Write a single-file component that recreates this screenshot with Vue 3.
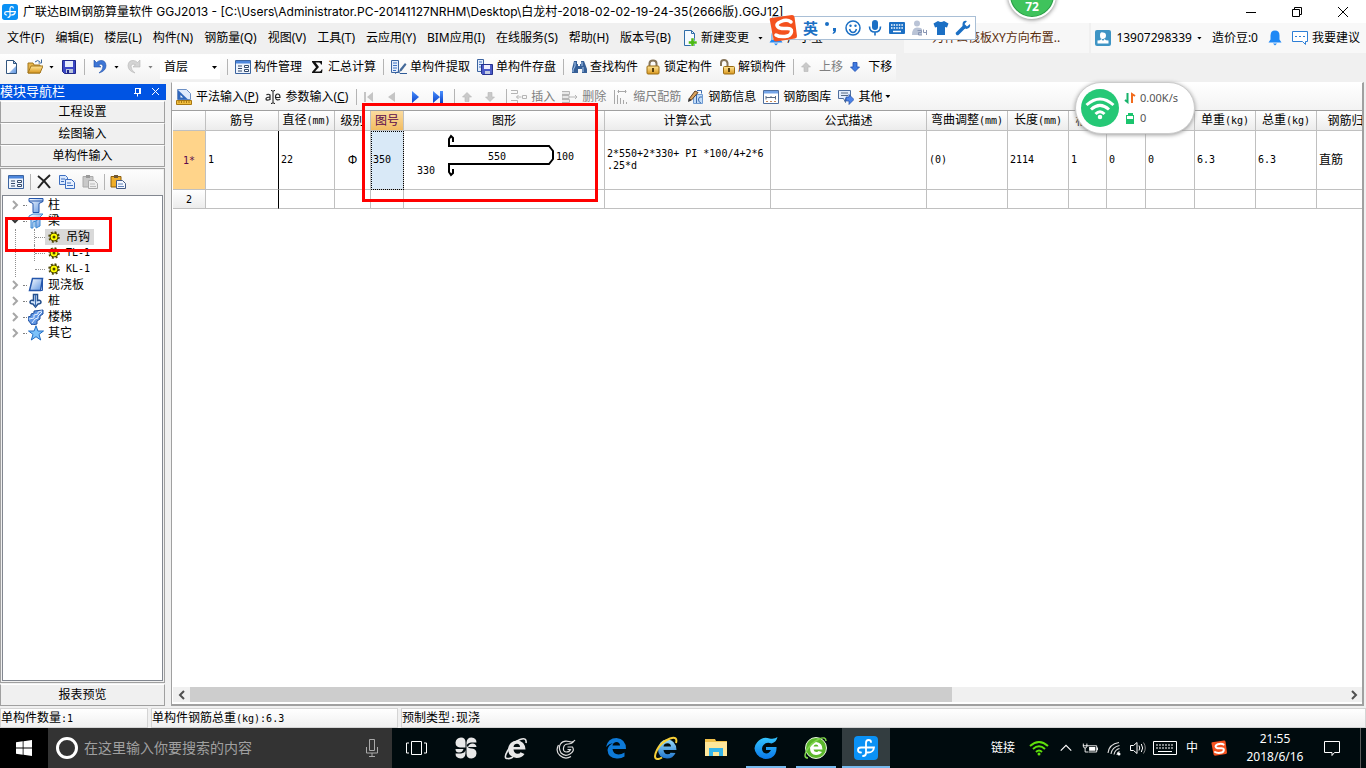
<script setup>
const menus = ['文件(F)', '编辑(E)', '楼层(L)', '构件(N)', '钢筋量(Q)', '视图(V)', '工具(T)', '云应用(Y)', 'BIM应用(I)', '在线服务(S)', '帮助(H)', '版本号(B)']

const columns = [
  { label: '', w: 33 }, { label: '筋号', w: 73 }, { label: '直径', unit: '(mm)', w: 56 },
  { label: '级别', w: 36 }, { label: '图号', w: 33, active: true }, { label: '图形', w: 201 },
  { label: '计算公式', w: 166 }, { label: '公式描述', w: 156 }, { label: '弯曲调整', unit: '(mm)', w: 81 },
  { label: '长度', unit: '(mm)', w: 61 }, { label: '根数', w: 38 }, { label: '搭接', w: 39 },
  { label: '损耗', unit: '(%)', w: 49 }, { label: '单重', unit: '(kg)', w: 61 },
  { label: '总重', unit: '(kg)', w: 61 }, { label: '钢筋归类', w: 70 },
]
const tableWidth = columns.reduce((sum, c) => sum + c.w, 0)

const tree = [
  { label: '柱', icon: 'column' },
  { label: '梁', icon: 'beam', open: true, children: [
    { label: '吊钩', selected: true }, { label: 'TL-1', latin: true }, { label: 'KL-1', latin: true },
  ] },
  { label: '现浇板', icon: 'slab' }, { label: '桩', icon: 'pile' },
  { label: '楼梯', icon: 'stairs' }, { label: '其它', icon: 'star' },
]

const apps = [
  { id: 'taskview', name: '任务视图' }, { id: 'pinwheel', name: '应用' }, { id: 'ewhite', name: '浏览器' },
  { id: 'gwhite', name: '广联达' }, { id: 'edge', name: 'Edge' }, { id: 'ie', name: 'Internet Explorer' },
  { id: 'folder', name: '文件资源管理器' }, { id: 'gblue', name: '广联达', run: true },
  { id: 'egreen', name: '浏览器', run: true }, { id: 'ggj', name: 'GGJ2013', run: true, on: true },
]
</script>

<template>
  <div class="desktop">
    <svg class="defs" aria-hidden="true">
      <defs>
        <linearGradient id="gBlue" x1="0" y1="0" x2="1" y2="1"><stop offset="0" stop-color="#fff" /><stop offset="1" stop-color="#5b93e0" /></linearGradient>
        <linearGradient id="gGold" x1="0" y1="0" x2="0" y2="1"><stop offset="0" stop-color="#ffe79a" /><stop offset="1" stop-color="#d9961c" /></linearGradient>
        <linearGradient id="gPlay" x1="0" y1="0" x2="0" y2="1"><stop offset="0" stop-color="#4a90ff" /><stop offset="1" stop-color="#0b43c8" /></linearGradient>
        <linearGradient id="gIe" x1="0" y1="0" x2="0" y2="1"><stop offset="0" stop-color="#9adcfb" /><stop offset="1" stop-color="#1d74cc" /></linearGradient>
        <linearGradient id="gG" x1="0" y1="0" x2="0" y2="1"><stop offset="0" stop-color="#35c6ff" /><stop offset="1" stop-color="#0a78e8" /></linearGradient>
      </defs>
      <symbol id="ggj" viewBox="0 0 24 24"><rect width="24" height="24" rx="4" fill="#0a91f5" /><path d="M12 17V7q0-3 2.500-3T17 6M12 11.500H7q-3 0-3 2.500t3 2.500M12 11.500h8q-.5 5-6 5h-2M12 17q0 3-3 3" fill="none" stroke="#fff" stroke-width="1.800" stroke-linecap="round" /></symbol>
      <symbol id="new" viewBox="0 0 16 16"><path d="M2.500 1.500h7l3 3v10h-10z" fill="url(#gBlue)" stroke="#33567f" /><path d="M3 2h6v3h3v2l-7 7h-2z" fill="#fff" /><path d="M9.500 1.500v3h3" fill="none" stroke="#33567f" /></symbol>
      <symbol id="open" viewBox="0 0 16 16"><path d="M1 14V4h5l1 2h6v8z" fill="#e6b64c" stroke="#a3761d" /><path d="M1 14l3-7h12l-3 7z" fill="url(#gGold)" stroke="#a3761d" /><path d="M8 3q3-3 5 0M14.500 0.500v3.500h-3" fill="none" stroke="#38669c" /></symbol>
      <symbol id="save" viewBox="0 0 16 16"><path d="M1.500 1.500h13v13h-11l-2-2z" fill="#3b47c4" stroke="#20288a" /><path d="M4 2h8v6H4z" fill="#e6ecfb" /><path d="M5 10h7v4H5z" fill="#b9c4dd" /><path d="M6 11h2v3H6z" fill="#20288a" /></symbol>
      <symbol id="undo" viewBox="0 0 16 16"><path d="M2 1v7h7L6.500 5.800Q10 4 11 7q0 4-4 7 7-2 7-7.500Q13.500 1 8.500 1.500 6 1.800 4.500 3.500z" fill="#3d76d6" stroke="#204fa8" stroke-width=".6" /></symbol>
      <symbol id="redo" viewBox="0 0 16 16"><path d="M14 1v7H7l2.500-2.200Q6 4 5 7q0 4 4 7-7-2-7-7.500Q2.500 1 7.500 1.500 10 1.800 11.500 3.500z" fill="#d4d4d4" stroke="#b5b5b5" stroke-width=".6" /></symbol>
      <symbol id="form" viewBox="0 0 16 16"><path d="M.5 1.500h15v13H.5z" fill="#eef4fd" stroke="#3c64a0" /><path d="M1 2h14v2.500H1z" fill="#4c86dc" /><path d="M3 7h4M3 9.500h4M3 12h4" stroke="#354a6b" /><path d="M9.500 6.500h4v2h-4zM9.500 10.500h4v2h-4z" fill="#fff" stroke="#354a6b" /></symbol>
      <symbol id="sigma" viewBox="0 0 16 16"><path d="M3 2h10v3.500h-1Q11.500 3.500 10 3.500H6.500L10 8l-4 4.500h4.500q1.500 0 2-2h1L13 14H3v-1l4-4.800L3 3z" fill="#111" /></symbol>
      <symbol id="extract" viewBox="0 0 16 16"><path d="M.5 1.500h7v12h-7z" fill="#e4edfb" stroke="#3c64a0" /><path d="M2 4h4M2 6.500h4M2 9h4M2 11.500h3" stroke="#3f72c4" /><path d="M8 13l1-3 5-6 1.500 1.500-5 6.500z" fill="#456a9a" /><path d="M4 14.500q4-3 5 0h7" fill="none" stroke="#2f5b98" /></symbol>
      <symbol id="store" viewBox="0 0 16 16"><path d="M.5.500h6v12h-6z" fill="#e4edfb" stroke="#3c64a0" /><path d="M2 3h3M2 5.500h3M2 8h3" stroke="#3f72c4" /><path d="M4.500 5.500h11v10h-10l-1-1z" fill="#4a5ac8" stroke="#26328e" /><path d="M7 6h6v4H7z" fill="#eef" /><path d="M8 12h5v3H8z" fill="#c4cce2" /></symbol>
      <symbol id="find" viewBox="0 0 16 16"><path d="M3 2h3v3h1v2h2V5h1V2h3l3 8v4h-5v-4H7v4H1v-4z" fill="#365f96" /><path d="M4 3v4l-2 4v2M11 3v4M12 8v5" stroke="#a8c8ef" fill="none" /></symbol>
      <symbol id="lock" viewBox="0 0 16 16"><path d="M4.500 8V4.500q0-3 3.500-3t3.500 3V8" fill="none" stroke="#85745a" stroke-width="2" /><rect x="2" y="7" width="12" height="8" rx="1" fill="url(#gGold)" stroke="#9b6d14" /><path d="M8 9v4" stroke="#5b400d" stroke-width="2" /></symbol>
      <symbol id="unlock" viewBox="0 0 16 16"><path d="M2 7V4q0-3 3-3t3.500 3v4" fill="none" stroke="#85745a" stroke-width="2" /><rect x="4.500" y="7.500" width="11" height="7.500" rx="1" fill="url(#gGold)" stroke="#9b6d14" /><path d="M10 9v4" stroke="#5b400d" stroke-width="2" /></symbol>
      <symbol id="upg" viewBox="0 0 10 10"><path d="M5 .5L9.500 5H7v4.500H3V5H.5z" fill="#c9c9c9" stroke="#b5b5b5" stroke-width=".6" /></symbol>
      <symbol id="downg" viewBox="0 0 10 10"><path d="M5 9.500L9.500 5H7V.5H3V5H.5z" fill="#c9c9c9" stroke="#b5b5b5" stroke-width=".6" /></symbol>
      <symbol id="downb" viewBox="0 0 10 10"><path d="M5 9.500L9.500 5H7V.5H3V5H.5z" fill="#3f7ae0" stroke="#1d4bb0" stroke-width=".8" /></symbol>
      <symbol id="ruler" viewBox="0 0 16 16"><path d="M1.500.500h9l4 4v6h-13z" fill="#dfeafc" stroke="#6c8fc4" /><path d="M2 1l10 9.500H2z" fill="#2f67bd" /><path d="M4.500 6v2.500H7z" fill="#fff" /><path d="M.5 11.500h15v4H.5z" fill="#f2bf3f" stroke="#a87812" /><path d="M3 12v2M5.500 12v2M8 12v2M10.500 12v2M13 12v2" stroke="#a87812" /></symbol>
      <symbol id="abc" viewBox="0 0 16 16"><path d="M1.500 6Q3 4.500 5 6v5M5 8Q1 8 1 10t4 .5M10.500 8.500h4.500Q15 5 12.700 5T10.500 8.500q.5 3.500 4.500 2" fill="none" stroke="#222" stroke-width="1.200" /><path d="M6 1.500q2 0 2 1 0-1 2-1M8 2.500v11M6 14.500q2 0 2-1 0 1 2 1" fill="none" stroke="#111" /></symbol>
      <symbol id="first" viewBox="0 0 10 12"><path d="M0 1h2v10H0zM9 1v10L3 6z" fill="#c5c5c5" /></symbol>
      <symbol id="prev" viewBox="0 0 10 12"><path d="M8 1v10L1 6z" fill="#c5c5c5" /></symbol>
      <symbol id="next" viewBox="0 0 10 12"><path d="M2 0v12l7-6z" fill="url(#gPlay)" /></symbol>
      <symbol id="last" viewBox="0 0 10 12"><path d="M0 0v12l7-6zM7 0h3v12H7z" fill="url(#gPlay)" /></symbol>
      <symbol id="insert" viewBox="0 0 16 16"><path d="M0 1.500h6.500v3H0M0 11.500h6.500v3H0M11.500 6.500h4v3h-4zM10.500 8h-5M7.500 6L5.500 8l2 2" fill="none" stroke="#b5b5b5" /></symbol>
      <symbol id="delete" viewBox="0 0 16 16"><path d="M0 2.500h7.500v3H0M0 10.500h7.500v3H0M0 6.500h7v3H0z" fill="#e8e8e8" stroke="#b5b5b5" /><path d="M7 8h8M13 6l2 2-2 2" fill="none" stroke="#b5b5b5" /></symbol>
      <symbol id="scale" viewBox="0 0 16 16"><path d="M1.500 1v14M4.500 2.500h9M5.500 1v3M12.500 1v3M4.500 6v9M7.500 9v6M10.500 11v4M13.500 13v2" fill="none" stroke="#a8a8a8" /></symbol>
      <symbol id="info" viewBox="0 0 16 16"><path d="M5.500 5.500h9v9h-9z" fill="#c2dcf8" stroke="#6f9bd2" /><path d="M9 1.500h4.500v3M8.500 6v8M14 8q-3-1-3.500 2t2.500 4" stroke="#3d6cae" fill="none" /><path d="M1 10L7 2l3 1.500L3.500 11z" fill="#d9a35e" stroke="#5c3e23" /><path d="M.5 9.500L0 13l3.500-1.500z" fill="#333" /></symbol>
      <symbol id="lib" viewBox="0 0 16 16"><path d="M.5 1.500h15v13H.5z" fill="#fff" stroke="#4e6e9e" /><path d="M1 2h14v2.500H1z" fill="#75a5e8" /><path d="M3 7v3.500M3 8.500h9M12.500 7v3.500M8 8.500V7" fill="none" stroke="#596a82" /><path d="M3 12.500h2M7 12.500h2M11 12.500h2" stroke="#c78a5a" /></symbol>
      <symbol id="other" viewBox="0 0 16 16"><path d="M.5 1.500h12v8h-5v4l-2-4h-5z" fill="#e2edfc" stroke="#4e6e9e" /><path d="M3 4h7M3 6.500h7" stroke="#596a82" /><path d="M8 8h3V5.500l5 5-5 5V12H8z" fill="#4c83e8" stroke="#214ca3" stroke-width=".7" /></symbol>
      <symbol id="cross" viewBox="0 0 16 16"><path d="M2 2q7 5 12 12M14 1Q8 6 2 14" fill="none" stroke="#222" stroke-width="2" /></symbol>
      <symbol id="copy" viewBox="0 0 16 16"><path d="M.5 1.500h6l2 2v7h-8z" fill="#d9e8fd" stroke="#3e6fc0" /><path d="M6.500 5.500h6l3 3v6h-9z" fill="#e8f1fe" stroke="#3e6fc0" /><path d="M2 5h4M2 7.500h3M8 9h4M8 11.500h6" stroke="#3e6fc0" /></symbol>
      <symbol id="pasteg" viewBox="0 0 16 16"><path d="M1 2.500h10V13H1z" fill="#c9c9c9" stroke="#aaa" /><path d="M4 1h4v3H4z" fill="#999" /><path d="M6.500 6.500h6l3 3v5h-9z" fill="#eee" stroke="#aaa" /><path d="M8 10h5M8 12.500h6" stroke="#bbb" /></symbol>
      <symbol id="paste" viewBox="0 0 16 16"><path d="M1 2.500h10V13H1z" fill="#efae2a" stroke="#8c5e0d" /><path d="M4 1h4v3H4z" fill="#705836" /><path d="M6.500 6.500h6l3 3v5h-9z" fill="#f4f8ff" stroke="#445a85" /><path d="M8 10h5M8 12.500h6" stroke="#6584b9" /></symbol>
      <symbol id="column" viewBox="0 0 16 16"><path d="M1 1.500h14v3l-4 2v9H5v-9l-4-2z" fill="url(#gBlue)" stroke="#2456ab" /><path d="M1 4h14" stroke="#2456ab" /></symbol>
      <symbol id="beam" viewBox="0 0 16 16"><path d="M1 3l4-2h10l-3 3v9l-4 2V8L5 9v6H3V7L1 6z" fill="url(#gBlue)" stroke="#3c8ad4" /><path d="M1 5h11M8 8l4-3M7 8v6" fill="none" stroke="#3c8ad4" /></symbol>
      <symbol id="slab" viewBox="0 0 16 16"><path d="M4.500 1.500h10l-2 12h-11z" fill="url(#gBlue)" stroke="#2456ab" stroke-width="1.500" /><path d="M14.500 1.500v12h-2" fill="none" stroke="#2456ab" /></symbol>
      <symbol id="pile" viewBox="0 0 16 16"><path d="M5.500 1.500h4v6q3-1 3.500 1.500 0 2-3 2L7.500 14 5 11q-3 0-3-2 .5-2.500 3.500-1.500z" fill="#cfe2fb" stroke="#234f8d" stroke-width="1.500" /><path d="M7.500 2v12" stroke="#3a6fb5" /></symbol>
      <symbol id="stairs" viewBox="0 0 16 16"><path d="M0 11V8l3-1V5l3-1V2l9-1v4l-3 2v3l-3 2v3l-5 1z" fill="#5f96e5" stroke="#23529f" /><path d="M1 10l5-1V6l4-1V3l4-1M4 14l3-4 3-1V7l4-4" fill="none" stroke="#e6f0ff" /></symbol>
      <symbol id="star" viewBox="0 0 16 16"><path d="M8 .8l1.900 5.200h5.600l-4.500 3.400 1.700 5.600L8 11.700 3.300 15 5 9.400.5 6h5.600z" fill="#7cc2fa" stroke="#226dc4" /></symbol>
      <symbol id="gear" viewBox="0 0 12 12"><circle cx="6" cy="6" r="4" fill="#ff0" stroke="#4d4600" /><circle cx="6" cy="6" r="5" fill="none" stroke="#4d4600" stroke-width="1.500" stroke-dasharray="2 1.930" /><circle cx="6" cy="6" r="1.500" fill="#4d4600" /></symbol>
      <symbol id="newdoc" viewBox="0 0 16 16"><path d="M2.500.500h7l3 3v12h-10z" fill="#f5faff" stroke="#2f6da8" /><path d="M9.500.500v3h3" fill="none" stroke="#2f6da8" /><path d="M9 8h3v3h3v3h-3v2.500H9V14H6.500v-3H9z" fill="#4cb916" stroke="#fff" stroke-width=".5" /></symbol>
      <symbol id="user" viewBox="0 0 16 16"><rect width="16" height="16" rx="2" fill="#3e94c4" /><path d="M8 2.500q3 0 3 3T8 9 5 5.500t3-3M2.500 13.500v-3q3 0 4-1.500L8 11l1.500-2q1 1.500 4 1.500v3z" fill="#fff" /></symbol>
      <symbol id="bell" viewBox="0 0 14 16"><path d="M7 .500q4.500 0 4.500 5v4l2 3H.5l2-3v-4q0-5 4.500-5M5 13.500h4L7 15.500z" fill="#1e88f5" /></symbol>
      <symbol id="chat" viewBox="0 0 16 16"><path d="M.5 1.500h15v10h-2v3l-3-3H.5z" fill="#fff" stroke="#2e7fd6" /><path d="M3 6.500h2M7 6.500h2M11 6.500h2" stroke="#2e7fd6" /></symbol>
      <symbol id="sogou" viewBox="0 0 28 28"><path d="M2 4L23 1q2 0 2.500 2L28 22q0 2-2 2.500L7 27.500q-2 0-2.500-2L1 7Q0 4 2 4z" fill="#f4511e" /><path d="M22 8Q18 5 12 7.500T9 13q2 2 8 1.500t5.500 3Q22 22 16 22.500T7 21" fill="none" stroke="#fff" stroke-width="3.500" stroke-linecap="round" /></symbol>
      <symbol id="comma" viewBox="0 0 16 16"><circle cx="4" cy="4" r="2" fill="#1b6fc4" /><path d="M10 8h3v3q0 2-3 3l-.5-.5 1.500-2.500h-1z" fill="#1b6fc4" /></symbol>
      <symbol id="smile" viewBox="0 0 16 16"><circle cx="8" cy="8" r="7" fill="none" stroke="#1b6fc4" stroke-width="1.500" /><path d="M4.500 9q1 3.500 3.500 3.500T11.500 9" fill="none" stroke="#1b6fc4" stroke-width="1.500" /><circle cx="5.500" cy="5.800" r="1.200" fill="#1b6fc4" /><circle cx="10.500" cy="5.800" r="1.200" fill="#1b6fc4" /></symbol>
      <symbol id="micb" viewBox="0 0 16 16"><rect x="5" y="0" width="6" height="10" rx="3" fill="#1b6fc4" /><path d="M2.500 6.500q0 5.500 5.500 5.500t5.500-5.500M8 12v3.500" fill="none" stroke="#1b6fc4" stroke-width="1.600" /></symbol>
      <symbol id="keyb" viewBox="0 0 16 16"><rect y="2" width="16" height="12" rx="1" fill="#1b6fc4" /><path d="M2 5h12M2 8h12" stroke="#fff" stroke-width="1.500" stroke-dasharray="1.500 1.100" /><path d="M4 11.500h8" stroke="#fff" stroke-width="1.500" /></symbol>
      <symbol id="person" viewBox="0 0 16 16"><circle cx="6" cy="3.500" r="3" fill="#b9c3d6" /><path d="M1 15Q1 7.500 6 7.500t5 2v5.500z" fill="#b9c3d6" /><path d="M6.500 10.500h4v2h-3v2.500h3.500M15.500 10v5M12.500 9.500v3h3" fill="none" stroke="#8996b4" /></symbol>
      <symbol id="shirt" viewBox="0 0 16 16"><path d="M5 1q3 2 6 0l4.500 2.500L14 7.500l-2-.5v8H4V7l-2 .5L.5 3.500z" fill="#1b6fc4" /></symbol>
      <symbol id="wrench" viewBox="0 0 16 16"><path d="M2.500 13.500L9 7" stroke="#1b6fc4" stroke-width="3.500" stroke-linecap="round" /><path d="M15 4l-3 2.500L9.500 4 12 1Q8 0 7.500 4t4 5Q16 8 15 4z" fill="#1b6fc4" /></symbol>
      <symbol id="wifi" viewBox="0 0 20 16"><path d="M1 6Q10-2 19 6M4 9q6-5.500 12 0M7 12q3-3 6 0" fill="none" stroke="currentColor" stroke-width="2" /><circle cx="10" cy="14" r="1.500" fill="currentColor" /></symbol>
      <symbol id="win" viewBox="0 0 16 16"><path d="M0 2.200L6.700 1.300v6.300H0zM7.500 1.200L16 0v7.600H7.500zM0 8.400h6.700v6.300L0 13.800zM7.500 8.400H16V16l-8.500-1.200z" fill="#fff" /></symbol>
      <symbol id="mic" viewBox="0 0 16 18"><path d="M5.500.500h5v11h-5zM2.500 8v6h11V8M8 14v3.500M5 17.500h6" fill="none" stroke="#aaa" /></symbol>
      <symbol id="taskview" viewBox="0 0 24 24"><path d="M7.500 5.500h10v13h-10zM5 7H2.500v10H5M20 7h2.500v10H20" fill="none" stroke="#fff" /></symbol>
      <symbol id="pinwheel" viewBox="0 0 24 24"><path d="M11.500 11.500H6q-4.500-.5-4.500-5Q2 2 7 1.500q4.500 0 4.500 5zM12.500 10V6.500q.5-5 5-5 5 .5 5 5H17Q13 7 12.500 10zM14 12.500h4q4.500.5 4.500 5-.5 4.500-5 5-5 0-5-5v-9q1 4 5 4zM11.500 14v3.500q-.5 5-5 5-5-.5-5-5H7q4-.5 4.500-3.500z" fill="#e8e8e8" /><path d="M1.500 13h8q-1 3.500-4.500 3.500T1.500 13zM14 11q1-3.500 4.500-3.500T22.500 11z" fill="#e8e8e8" /></symbol>
      <symbol id="ewhite" viewBox="0 0 24 24"><path d="M20.500 18Q18 22 12.500 22 4 21 4 13 5 5 13 4.500q8 .5 8.500 9H9.500q.5 4 4 4.300 2.500 0 3-1.500zM9.500 11H16q0-3-3-3.200-3 0-3.500 3.200z" fill="#e8e8e8" fill-rule="evenodd" /><path d="M22 7q1-6-6-3.500Q8 7 3.500 15T4 22.500q2 .5 5-1.500" fill="none" stroke="#e8e8e8" stroke-width="1.600" /></symbol>
      <symbol id="gwhite" viewBox="0 0 24 24"><path d="M21 4q-2 3-6 1.500Q9 4 6.500 8T7 17q4 4 9 1t2.500-7h-5M20 5q-2 3-6 3-4 0-4.500 4t3 4q3 0 4-2.500h-3M4.500 9Q1 15 6 19.500t11 1" fill="none" stroke="#ddd" stroke-width="1.200" /></symbol>
      <symbol id="edge" viewBox="0 0 24 24"><path d="M2 11Q4 2 12.500 2 22 3 22 13H8.500q.5 5 6 5.500 3 0 6-2v4Q17 23 12.500 22.500 4 22 3.500 14 4 9.500 9 7 5 7.500 2 11zm6.500-1.500h7.500q0-3-3-3.500-4 0-4.500 3.500z" fill="#0d7ad8" fill-rule="evenodd" /></symbol>
      <symbol id="ie" viewBox="0 0 24 24"><path d="M21.500 17Q19 22.500 13 22.500 4 22 4 13 5 4 13 3.500q9 .5 9.500 10.500H9.500q.5 4 4 4.300 2.500 0 3-1.500zM9.500 10.500H17q0-3-3.500-3.200-3.500 0-4 3.200z" fill="url(#gIe)" fill-rule="evenodd" /><path d="M22 7q2-7-6-4.500Q7 6 3 14t0 9q2 .5 5-1.500" fill="none" stroke="#f6cf38" stroke-width="2" /></symbol>
      <symbol id="folder" viewBox="0 0 24 24"><path d="M1 3h10l1 2h11v15H1z" fill="#f0c04a" /><path d="M1 6h22v14H1z" fill="#ffe79a" /><path d="M5 20v-8h14v8h-4v-4H9v4z" fill="#35b5ea" /></symbol>
      <symbol id="gblue" viewBox="0 0 24 24"><path d="M23.500 1q-1 5-6 6.500-5-2-8 1.500t0 7.500q4 2.500 6.500-1L17 14h-5v-3h10.500q.5 8-5.500 11-9 3-14-3.500T3 6.500Q8 0 15.500 2.500q5 1 8-1.500z" fill="url(#gG)" /></symbol>
      <symbol id="egreen" viewBox="0 0 24 24"><circle cx="12" cy="12" r="10.500" fill="#5cb82c" stroke="#e6f5dc" stroke-width="1" /><path d="M18 16q-2 3-6 3-6-.5-6-7 .5-6 6-6 6.500.5 6.500 7.500H9.500q.5 2.500 3 2.500 1.500 0 2-1zM9.500 10.500h5q-.5-2-2.500-2t-2.500 2z" fill="#fff" fill-rule="evenodd" /><path d="M22 5q0-5-7-2Q6 8 2.500 15T4 22" fill="none" stroke="#7fd64b" stroke-width="1.500" /></symbol>
      <symbol id="up" viewBox="0 0 16 16"><path d="M2 11l6-6 6 6" fill="none" stroke="#fff" stroke-width="1.300" /></symbol>
      <symbol id="battery" viewBox="0 0 18 16"><path d="M5.500 5.500h11v7h-9M1.500 3v3q0 2 2 2t2-2V3M1 5.500h5M3.500 8v4.500H7" fill="none" stroke="#fff" /><path d="M8 7h7v4H8zM17 7.500h1v3h-1z" fill="#fff" /></symbol>
      <symbol id="signal" viewBox="0 0 16 16"><path d="M2 13Q3 4 13 2.500M5 14q1-7 8.500-8.500M8 14.500q1-5 5.500-6M11 15q0-2.500 2.500-3.500" fill="none" stroke="#ddd" stroke-width="1.100" /><circle cx="13" cy="14" r="1.500" fill="#fff" /></symbol>
      <symbol id="volume" viewBox="0 0 16 16"><path d="M.5 5.500h3l3.500-3v11l-3.500-3h-3zM9 5.500q1.500 2.500 0 5M11.300 4q2.700 4 0 8" fill="none" stroke="#fff" /><path d="M13.500 2.500q3.500 5.500 0 11" fill="none" stroke="#888" /></symbol>
      <symbol id="keyw" viewBox="0 0 24 16"><path d="M.5 1.500h23v13H.5z" fill="none" stroke="#fff" /><path d="M3 5h18M3 8h18" stroke="#fff" stroke-dasharray="2 1" /><path d="M5 11.500h14" stroke="#fff" /></symbol>
      <symbol id="note" viewBox="0 0 16 16"><path d="M.5 1.500h15v11h-5l-2.500 3v-3H.5z" fill="none" stroke="#fff" /></symbol>
    </svg>

    <header class="titlebar">
      <svg class="i16"><use href="#ggj" /></svg>
      <h1>广联达BIM钢筋算量软件 GGJ2013 - [C:\Users\Administrator.PC-20141127NRHM\Desktop\白龙村-2018-02-02-19-24-35(2666版).GGJ12]</h1>
      <div class="winbtns">
        <button aria-label="最小化"><svg class="i12"><path d="M1 6.500h10" /></svg></button>
        <button aria-label="还原"><svg class="i12"><path d="M1.500 3.500h7v7h-7zM3.500 3.500v-2h7v7h-2" /></svg></button>
        <button aria-label="关闭"><svg class="i12"><path d="M1 1l10 10M11 1L1 11" /></svg></button>
      </div>
    </header>

    <nav class="menubar">
      <button v-for="m in menus" :key="m">{{ m }}</button>
      <button class="change"><svg class="i16"><use href="#newdoc" /></svg>新建变更<i class="tri"></i></button>
      <button class="helper"><svg class="i16"><use href="#bell" /></svg>广小宝</button>
      <a href="#" class="question">为什么筏板XY方向布置..</a>
      <div class="account">
        <button class="phone"><svg class="i16"><use href="#user" /></svg>13907298339<i class="tri"></i></button>
        <span>造价豆:0</span>
        <button aria-label="通知"><svg class="i14"><use href="#bell" /></svg></button>
        <button class="advice"><svg class="i16"><use href="#chat" /></svg>我要建议</button>
      </div>
    </nav>

    <div class="toolrow">
      <div class="toolbar top">
        <button aria-label="新建"><svg class="i16"><use href="#new" /></svg></button>
        <button class="drop" aria-label="打开"><svg class="i16"><use href="#open" /></svg><i class="tri"></i></button>
        <button aria-label="保存"><svg class="i16"><use href="#save" /></svg></button>
        <i class="sep"></i>
        <button class="drop" aria-label="撤销"><svg class="i16"><use href="#undo" /></svg><i class="tri"></i></button>
        <button class="drop off" aria-label="恢复"><svg class="i16"><use href="#redo" /></svg><i class="tri"></i></button>
        <label class="floor"><select aria-label="楼层"><option>首层</option></select><i class="tri"></i></label>
        <i class="sep"></i>
        <button><svg class="i16"><use href="#form" /></svg>构件管理</button>
        <button><svg class="i16"><use href="#sigma" /></svg>汇总计算</button>
        <i class="sep"></i>
        <button><svg class="i16"><use href="#extract" /></svg>单构件提取</button>
        <button><svg class="i16"><use href="#store" /></svg>单构件存盘</button>
        <i class="sep"></i>
        <button><svg class="i16"><use href="#find" /></svg>查找构件</button>
        <button><svg class="i16"><use href="#lock" /></svg>锁定构件</button>
        <button><svg class="i16"><use href="#unlock" /></svg>解锁构件</button>
        <i class="sep"></i>
        <button class="move off"><svg class="i10"><use href="#upg" /></svg>上移</button>
        <button class="move"><svg class="i10"><use href="#downb" /></svg>下移</button>
      </div>
    </div>

    <main class="work">
      <aside class="side">
        <div class="sidehead">
          <h2>模块导航栏</h2>
          <button aria-label="固定"><svg class="i12"><path d="M3.500 2v5M7.500 2v5M3 2.500h5M2 7.500h7M5.500 7.500v3M8.500 2v5" /></svg></button>
          <button aria-label="关闭"><svg class="i12"><path d="M2 2l7 7M9 2l-7 7" /></svg></button>
        </div>
        <button class="mod">工程设置</button>
        <button class="mod">绘图输入</button>
        <button class="mod">单构件输入</button>
        <div class="sidebody">
          <div class="sidetools">
            <button aria-label="构件管理"><svg class="i16"><use href="#form" /></svg></button>
            <i class="sep"></i>
            <button aria-label="删除"><svg class="i16"><use href="#cross" /></svg></button>
            <button aria-label="复制"><svg class="i16"><use href="#copy" /></svg></button>
            <button aria-label="粘贴" disabled><svg class="i16"><use href="#pasteg" /></svg></button>
            <i class="sep"></i>
            <button aria-label="粘贴构件"><svg class="i16"><use href="#paste" /></svg></button>
          </div>
          <ul class="tree">
            <li v-for="n in tree" :key="n.label">
              <div class="node">
                <svg class="i10 chev"><path :d="n.open ? 'M2 3l3 3 3-3' : 'M3 1l4 4-4 4'" :stroke="n.open ? '#333' : '#a6a6a6'" /></svg>
                <i class="dots"></i>
                <svg class="i16"><use :href="'#' + n.icon" /></svg>
                <span>{{ n.label }}</span>
              </div>
              <ul v-if="n.children" class="kids">
                <li v-for="k in n.children" :key="k.label" class="kid">
                  <i class="branch"></i>
                  <span class="leaf" :class="{ sel: k.selected }"><svg class="i12"><use href="#gear" /></svg><b :class="{ mono: k.latin }">{{ k.label }}</b></span>
                </li>
              </ul>
            </li>
          </ul>
        </div>
        <button class="mod">报表预览</button>
        <i class="mark treemark"></i>
      </aside>

      <section class="pane">
        <div class="toolbar sub">
          <button><svg class="i16"><use href="#ruler" /></svg><span>平法输入(<u>P</u>)</span></button>
          <button><svg class="i16"><use href="#abc" /></svg><span>参数输入(<u>C</u>)</span></button>
          <i class="sep"></i>
          <button class="nav" aria-label="首条"><svg class="n12"><use href="#first" /></svg></button>
          <button class="nav" aria-label="上一条"><svg class="n12"><use href="#prev" /></svg></button>
          <button class="nav" aria-label="下一条"><svg class="n12"><use href="#next" /></svg></button>
          <button class="nav" aria-label="末条"><svg class="n12"><use href="#last" /></svg></button>
          <i class="sep"></i>
          <button class="nav" aria-label="上移行"><svg class="i10"><use href="#upg" /></svg></button>
          <button class="nav" aria-label="下移行"><svg class="i10"><use href="#downg" /></svg></button>
          <i class="sep"></i>
          <button class="off"><svg class="i16"><use href="#insert" /></svg>插入</button>
          <button class="off"><svg class="i16"><use href="#delete" /></svg>删除</button>
          <button class="off"><svg class="i16"><use href="#scale" /></svg>缩尺配筋</button>
          <button><svg class="i16"><use href="#info" /></svg>钢筋信息</button>
          <button><svg class="i16"><use href="#lib" /></svg>钢筋图库</button>
          <button><svg class="i16"><use href="#other" /></svg>其他<i class="tri"></i></button>
        </div>
        <div class="gridwrap">
          <table :style="{ width: tableWidth + 'px' }">
            <colgroup><col v-for="(c, i) in columns" :key="i" :style="{ width: c.w + 'px' }"></colgroup>
            <thead>
              <tr><th v-for="(c, i) in columns" :key="i" scope="col" :class="{ hot: c.active, thick: i === 1 }">{{ c.label }}<span v-if="c.unit" class="mono">{{ c.unit }}</span></th></tr>
            </thead>
            <tbody>
              <tr class="r1">
                <th scope="row" class="cur"><span class="mono">1*</span></th>
                <td class="mono thick">1</td><td class="mono">22</td><td class="mid">Φ</td><td class="mono pick">350</td>
                <td class="fig">
                  <svg viewBox="0 0 200 58">
                    <path d="M49 11V7l-2-2-2 3v7h100l4 5v8l-4 5H45v8l2 3 2-2v-4" fill="none" stroke="#000" stroke-width="2" />
                    <text x="84" y="29">550</text><text x="152" y="29">100</text><text x="13" y="43">330</text>
                  </svg>
                </td>
                <td class="mono">2*550+2*330+ PI *100/4+2*6<br>.25*d</td><td></td>
                <td class="mono">(0)</td><td class="mono">2114</td><td class="mono">1</td><td class="mono">0</td>
                <td class="mono">0</td><td class="mono">6.3</td><td class="mono">6.3</td><td>直筋</td>
              </tr>
              <tr class="r2">
                <th scope="row"><span class="mono">2</span></th>
                <td v-for="i in 15" :key="i" :class="{ thick: i === 1 }"></td>
              </tr>
            </tbody>
          </table>
        </div>
        <div class="scroll">
          <button aria-label="向左"><svg class="i10"><path d="M7 1L3 5l4 4" /></svg></button>
          <div class="track"><div class="thumb"></div></div>
          <button aria-label="向右"><svg class="i10"><path d="M3 1l4 4-4 4" /></svg></button>
        </div>
        <i class="mark gridmark"></i>
      </section>
    </main>

    <footer class="status">
      <span>单构件数量<b class="mono">:1</b></span>
      <span>单构件钢筋总重<b class="mono">(kg):6.3</b></span>
      <span>预制类型<b class="mono">:</b>现浇</span>
    </footer>

    <div class="taskbar">
      <button class="start" aria-label="开始"><svg class="i16"><use href="#win" /></svg></button>
      <label class="search">
        <i class="cortana"></i>
        <input type="text" aria-label="搜索" placeholder="在这里输入你要搜索的内容">
        <svg class="mic"><use href="#mic" /></svg>
      </label>
      <div class="apps">
        <button v-for="a in apps" :key="a.id" :aria-label="a.name" :class="{ run: a.run, on: a.on }"><svg class="i24"><use :href="'#' + a.id" /></svg></button>
      </div>
      <div class="tray">
        <span class="links">链接</span>
        <i class="slot wide green"><svg class="w20"><use href="#wifi" /></svg></i>
        <i class="slot"><svg class="i14"><use href="#up" /></svg></i>
        <i class="slot"><svg class="i16"><use href="#battery" /></svg></i>
        <i class="slot"><svg class="i16"><use href="#signal" /></svg></i>
        <i class="slot"><svg class="i16"><use href="#volume" /></svg></i>
        <i class="slot wide"><svg class="w24"><use href="#keyw" /></svg></i>
        <span class="slot">中</span>
        <i class="slot wide"><svg class="i16"><use href="#sogou" /></svg></i>
        <time class="clock"><span>21:55</span><span>2018/6/16</span></time>
        <button class="note" aria-label="通知中心"><svg class="i16"><use href="#note" /></svg></button>
      </div>
    </div>

    <div class="ime">
      <svg class="imelogo"><use href="#sogou" /></svg>
      <b>英</b>
      <svg v-for="n in ['comma', 'smile', 'micb', 'keyb', 'person', 'shirt', 'wrench']" :key="n" class="i16"><use :href="'#' + n" /></svg>
    </div>
    <div class="ball">72</div>
    <div class="net">
      <i class="disc"><svg class="w28"><use href="#wifi" /></svg></i>
      <div>
        <p><svg class="i12"><path d="M3.500 1v9L1 8" fill="none" stroke="#17b26a" stroke-width="2" /><path d="M8 11V2l3 2" fill="none" stroke="#f26b1d" stroke-width="2" /></svg>0.00K/s</p>
        <p><svg class="i12"><path d="M2 3h2V1h5v2h1v9H2z" fill="#1bc46d" /><path d="M3 4h6v3H3z" fill="#fff" /></svg>0</p>
      </div>
    </div>
  </div>
</template>

<style>
html, body, #app { height: 100%; }
body { overflow: hidden; }
</style>

<style scoped>
.desktop { position: relative; height: 100%; display: flex; flex-direction: column; background: #f0f0f0; color: #000; font: 12px/16px "Noto Sans", "Noto Sans CJK SC", sans-serif; overflow: hidden; white-space: nowrap; }
.desktop * { box-sizing: border-box; }
.defs { position: absolute; width: 0; height: 0; }
button { font: inherit; color: inherit; background: none; border: 0; padding: 0; margin: 0; display: flex; align-items: center; }
h1, h2, ul, p { margin: 0; padding: 0; font: inherit; list-style: none; }
b, i { font-weight: 400; font-style: normal; }
svg { display: block; flex: none; }
.i10 { width: 10px; height: 10px; } .i12 { width: 12px; height: 12px; } .i14 { width: 14px; height: 16px; }
.i16 { width: 16px; height: 16px; } .i24 { width: 24px; height: 24px; } .n12 { width: 10px; height: 12px; }
.w20 { width: 20px; height: 16px; } .w24 { width: 24px; height: 16px; } .w28 { width: 30px; height: 26px; }
.mono { font-family: "DejaVu Sans Mono", monospace; font-size: 10px; }
.tri { width: 5px; height: 3px; background: currentColor; clip-path: polygon(0 0, 100% 0, 50% 100%); flex: none; }

.titlebar { height: 23px; flex: none; background: #fff; display: flex; align-items: center; padding-left: 2px; gap: 5px; }
.titlebar h1 { font-family: Inter, "Noto Sans CJK SC", sans-serif; }
.winbtns { margin-left: auto; display: flex; }
.winbtns button { width: 46px; height: 20px; justify-content: center; }
.winbtns path { fill: none; stroke: #000; }

.menubar { height: 30px; flex: none; display: flex; align-items: center; gap: 11px; padding-left: 7px; }
.change { gap: 3px; } .change .tri { margin-left: 6px; }
.helper { gap: 3px; margin: 0 70px 0 -6px; }
.question { color: #5a2d0c; text-decoration: none; background: #f7f7f7; flex: 1; align-self: stretch; padding: 7px 0 0 28px; overflow: hidden; }
.account { display: flex; align-items: center; gap: 10px; background: #f8f8f8; align-self: stretch; padding: 0 6px 0 4px; margin-left: -9px; }
.phone { gap: 5px; } .advice { gap: 4px; }

.toolrow { height: 29px; flex: none; display: flex; }
.toolbar { display: flex; align-items: center; background: linear-gradient(#fff, #f3f3f3); }
.toolbar button { gap: 3px; }
.toolbar .off { color: #808080; }
.sep { width: 1px; height: 16px; background: #b4b4b4; flex: none; }
.top { gap: 7px; padding: 0 4px; height: 26px; margin-top: 1px; }
.toolbar .drop { gap: 6px; }
.toolbar .move { gap: 8px; }
.floor { position: relative; width: 60px; height: 24px; }
.floor select { appearance: none; width: 100%; height: 100%; border: 0; background: #fff; font: inherit; color: #000; padding: 0 4px; }
.floor .tri { position: absolute; right: 3px; top: 11px; }

.work { flex: 1; min-height: 0; display: flex; gap: 5px; padding-right: 2px; }
.side { position: relative; width: 166px; flex: none; display: flex; flex-direction: column; font-family: "Liberation Sans", "Noto Sans CJK SC", sans-serif; padding-top: 2px; }
.sidehead { height: 16px; background: #0054e3; color: #fff; display: flex; align-items: center; gap: 6px; padding-right: 4px; margin-bottom: 1px; }
.sidehead h2 { margin-right: auto; font-size: 13px; }
.sidehead path { fill: none; stroke: #fff; }
.mod { height: 22px; width: 165px; justify-content: center; border: 1px solid #a0a0a0; border-top-color: #fff; background: #f0f0f0; }
.sidebody { flex: 1; min-height: 0; display: flex; flex-direction: column; width: 165px; border: 1px solid #a0a0a0; margin: 1px 0; padding: 1px; }
.sidetools { height: 25px; flex: none; display: flex; align-items: center; padding: 0 0 2px 6px; gap: 7px; background: linear-gradient(#fdfdfd, #efefef); }
.sidetools .sep { margin: 0 -2px 0 -1px; }
.tree { flex: 1; background: #fff; border: 1px solid #828790; padding-top: 1px; }
.node { height: 16px; display: flex; align-items: center; padding-left: 7px; }
.node span { margin-left: 4px; }
.chev path { fill: none; stroke-width: 2; }
.dots { width: 4px; border-top: 1px dotted #808080; margin: 0 1px 0 3px; }
.kids { margin-left: 12px; border-left: 1px dotted #909090; padding-left: 18px; }
.kid { height: 16px; display: flex; align-items: center; border-left: 1px dotted #909090; }
.kid:last-child { border-left-color: transparent; }
.branch { width: 10px; border-top: 1px dotted #909090; }
.leaf { height: 16px; display: flex; align-items: center; gap: 6px; padding: 0 4px 0 3px; }
.sel { background: #d9d9d9; }

.mark { position: absolute; border: 3px solid #f00; pointer-events: none; }
.treemark { left: 5px; top: 135px; width: 107px; height: 35px; }
.gridmark { left: 190px; top: 20px; width: 236px; height: 99px; }

.pane { position: relative; flex: 1; min-width: 0; display: flex; flex-direction: column; border: 1px solid #a0a0a0; border-top-color: #fff; border-right-width: 2px; border-bottom-width: 2px; background: #fff; }
.sub { height: 28px; flex: none; gap: 7px; padding: 0 4px; border-bottom: 1px solid #a0a0a0; }
.sub button { gap: 4px; }
.sub .sep { margin: 0 -3px 0 1px; }
.nav { width: 16px; justify-content: center; }
.sub .tri { margin-left: -1px; }
.gridwrap { flex: 1; min-height: 0; overflow: hidden; margin-left: 1px; font-family: "Liberation Sans", "Noto Sans CJK SC", sans-serif; }
table { table-layout: fixed; border-collapse: separate; border-spacing: 0; }
th, td { border-right: 1px solid #c0c0c0; border-bottom: 1px solid #c0c0c0; padding: 0 2px; font-weight: 400; overflow: hidden; text-align: left; line-height: 12px; }
th { text-align: center; background: linear-gradient(#fff, #ececec); }
thead th { height: 20px; padding: 0; }
.r1 td, .r1 th { height: 59px; }
.r2 td, .r2 th { height: 19px; }
.thick { border-right: 1px solid #000; }
thead .thick { border-right-color: #c0c0c0; }
th.hot { background: linear-gradient(#fbdca0, #f2bc62); color: #5b0a4c; }
th.cur { background: #ffd48a; color: #5b0a4c; }
td.pick { background: #d9e9f7; outline: 1px dotted #000; outline-offset: -1px; }
td.mid { text-align: center; }
td.fig { padding: 0; }
.fig svg { width: 200px; height: 58px; }
.fig text { font-family: "DejaVu Sans Mono", monospace; font-size: 10px; }
.scroll { display: flex; height: 15px; flex: none; margin: 0 0 2px 1px; background: #f0f0f0; }
.scroll button { width: 17px; justify-content: center; }
.scroll path { fill: none; stroke: #505050; stroke-width: 2; }
.track { flex: 1; } .thumb { width: 66%; height: 100%; background: #cdcdcd; }

.status { height: 22px; flex: none; display: flex; gap: 3px; padding-top: 2px; font-family: "Liberation Sans", "Noto Sans CJK SC", sans-serif; }
.status span { width: 148px; border: 1px solid #d4d4d4; background: linear-gradient(#fff, #f0f0f0); padding-left: 0; line-height: 18px; }
.status span:nth-child(2) { width: 247px; } .status span:last-child { flex: 1; }

.taskbar { height: 40px; flex: none; display: flex; background: #000b0e; color: #fff; }
.start { width: 48px; justify-content: center; background: #000; }
.search { width: 344px; display: flex; align-items: center; background: #333; padding: 0 12px 0 8px; gap: 6px; }
.cortana { width: 22px; height: 22px; border: 3px solid #fff; border-radius: 50%; flex: none; }
.search input { flex: 1; min-width: 0; background: none; border: 0; padding: 0; color: #fff; font: 14px/20px "Noto Sans", "Noto Sans CJK SC", sans-serif; }
.search input::placeholder { color: #a0a0a0; opacity: 1; }
.mic { width: 16px; height: 18px; }
.apps { display: flex; gap: 2px; }
.apps button { width: 48px; height: 40px; justify-content: center; }
.apps .run { background: linear-gradient(#76b9ed, #76b9ed) center bottom / 40px 2px no-repeat; }
.apps .on { background-color: #333d40; background-size: 100% 2px; }
.tray { margin-left: auto; display: flex; align-items: center; }
.links { margin-right: 9px; }
.slot { width: 24px; display: flex; justify-content: center; }
.wide { width: 30px; }
.green { color: #5fe00c; }
.clock { width: 82px; display: flex; flex-direction: column; align-items: center; line-height: 18px; }
.note { width: 32px; height: 40px; justify-content: center; margin-right: 12px; }
.tray::after { content: ""; align-self: stretch; border-left: 1px solid #5a5a5a; width: 5px; }

.ime { position: absolute; left: 772px; top: 16px; width: 204px; height: 24px; background: #fff; border: 1px solid #a9bfd6; display: flex; align-items: center; gap: 6px; padding-right: 4px; color: #1b6fc4; }
.ime b { font-weight: 700; font-size: 15px; margin-right: -1px; }
.imelogo { width: 28px; height: 28px; margin-left: -4px; }
.ball { position: absolute; left: 1008px; top: -29px; width: 48px; height: 48px; border-radius: 50%; background: #3fc35c; border: 2px solid #fff; box-shadow: 0 0 0 1px #2c9a48 inset, 0 1px 4px #888; color: #fff; font-weight: 700; text-align: center; padding-top: 26px; }
.net { position: absolute; left: 1075px; top: 82px; width: 120px; height: 52px; border-radius: 26px; background: #fff; border: 1px solid #ccc; box-shadow: 0 1px 4px #999; display: flex; align-items: center; gap: 5px; padding-left: 5px; font-size: 11px; color: #555; }
.disc { width: 38px; height: 38px; border-radius: 50%; background: #25c876; color: #fff; display: flex; align-items: center; justify-content: center; }
.net p { display: flex; gap: 4px; align-items: center; height: 20px; }
</style>
